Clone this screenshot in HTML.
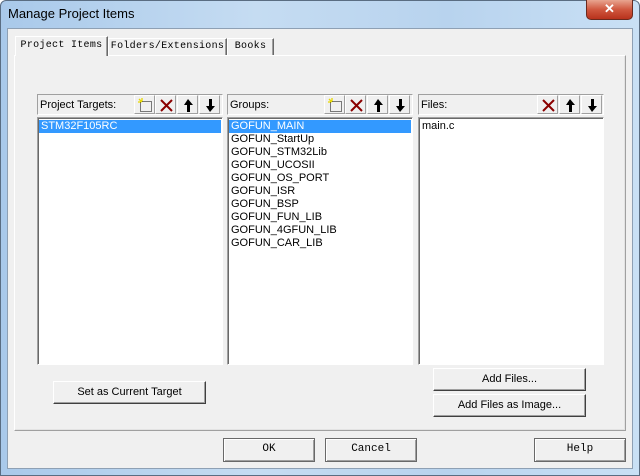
<!DOCTYPE html>
<html><head><meta charset="utf-8"><style>
*{box-sizing:border-box;margin:0;padding:0}
body{width:640px;height:476px;overflow:hidden;font-family:"Liberation Sans",sans-serif;font-size:11px;color:#000;background:#fff;position:relative}
.win{position:absolute;left:0;top:0;width:640px;height:476px;background:linear-gradient(90deg,#a9c9ea,#c5dcf2 40%,#b8d3ee 70%,#c9e0f5);border:1px solid #5a6d82;border-radius:6px 6px 0 0}
.title{position:absolute;left:8px;top:6px;font-size:13px;font-family:"Liberation Sans",sans-serif;color:#000}
.close{position:absolute;left:586px;top:0;width:47px;height:20px;background:linear-gradient(#e8a590,#d0583f 50%,#b8321c);border:1px solid #6b2a1e;border-top:none;border-radius:0 0 5px 5px;color:#fff;font-weight:bold;text-align:center;font-size:13px;line-height:18px}
.client{position:absolute;left:7px;top:28px;width:626px;height:441px;background:#f0f0f0;border:1px solid #8ea0b4}
.page{position:absolute;left:14px;top:55px;width:612px;height:376px;border:1px solid #fff;border-right-color:#a0a0a0;border-bottom-color:#a0a0a0;box-shadow:inset -1px -1px 0 #e3e3e3}
.tab{position:absolute;font-family:"Liberation Mono",monospace;font-size:10px;letter-spacing:0.3px;background:#f0f0f0;border:1px solid #fff;border-right:1px solid #696969;border-bottom:none;box-shadow:inset -1px 0 0 #a0a0a0;text-align:center;line-height:16px;white-space:nowrap;overflow:hidden}
.hdr{position:absolute;height:21px;border:1px solid #a0a0a0;border-right-color:#fff;border-bottom-color:#fff;line-height:21px;padding-left:2px}
.list{position:absolute;background:#fff;border:1px solid #a0a0a0;border-right-color:#fff;border-bottom-color:#fff;box-shadow:inset 1px 1px 0 #696969;padding:2px 1px}
.list div{height:13px;line-height:13px;padding-left:2px}
.sel{background:#3399ff;color:#fff}
.tb{position:absolute;top:95px;width:21px;height:19px;border:1px solid #fff;border-right-color:#a0a0a0;border-bottom-color:#a0a0a0}
.tb svg{position:absolute;left:2px;top:1px}
.btn{position:absolute;background:#f0f0f0;border:1px solid #fff;border-right-color:#404040;border-bottom-color:#404040;box-shadow:inset -1px -1px 0 #a0a0a0;text-align:center;line-height:21px}
.btn2{position:absolute;background:#f0f0f0;border:1px solid #696969;box-shadow:inset 1px 1px 0 #fff,inset -1px -1px 0 #a0a0a0;text-align:center;line-height:21px;font-family:"Liberation Mono",monospace}
</style></head><body>
<div class="win"></div>
<div class="title">Manage Project Items</div>
<div class="close">✕</div>
<div class="client"></div>
<div class="page"></div>
<div class="tab" style="left:108px;top:38px;width:119px;height:17px">Folders/Extensions</div>
<div class="tab" style="left:227px;top:38px;width:47px;height:17px">Books</div>
<div class="tab" style="left:15px;top:36px;width:93px;height:20px;line-height:18px;z-index:2">Project Items</div>

<div class="hdr" style="left:37px;top:94px;width:186px">Project Targets:</div>
<div class="hdr" style="left:227px;top:94px;width:186px">Groups:</div>
<div class="hdr" style="left:418px;top:94px;width:186px">Files:</div>

<svg width="0" height="0" style="position:absolute"><defs>
<g id="nw"><rect x="3.5" y="4.5" width="11" height="10" fill="none" stroke="#000" stroke-dasharray="1 1"/><path d="M2 2l3 3M5 1v3M1 5h3" stroke="#e8d800" stroke-width="1.3"/></g>
<g id="dl"><path d="M3 3l11 11M14 3L3 14" stroke="#8b0000" stroke-width="2"/></g>
<g id="up"><path d="M8 2l5 6h-3v7H7V8H4z" fill="#000"/></g>
<g id="dn"><path d="M8 15l5-6h-3V2H7v7H4z" fill="#000"/></g>
</defs></svg>
<div class="tb" style="left:134px"><svg width="16" height="16"><use href="#nw"/></svg></div>
<div class="tb" style="left:155px"><svg width="16" height="16"><use href="#dl"/></svg></div>
<div class="tb" style="left:177px"><svg width="16" height="16"><use href="#up"/></svg></div>
<div class="tb" style="left:199px"><svg width="16" height="16"><use href="#dn"/></svg></div>
<div class="tb" style="left:324px"><svg width="16" height="16"><use href="#nw"/></svg></div>
<div class="tb" style="left:345px"><svg width="16" height="16"><use href="#dl"/></svg></div>
<div class="tb" style="left:367px"><svg width="16" height="16"><use href="#up"/></svg></div>
<div class="tb" style="left:389px"><svg width="16" height="16"><use href="#dn"/></svg></div>
<div class="tb" style="left:537px"><svg width="16" height="16"><use href="#dl"/></svg></div>
<div class="tb" style="left:559px"><svg width="16" height="16"><use href="#up"/></svg></div>
<div class="tb" style="left:581px"><svg width="16" height="16"><use href="#dn"/></svg></div>

<div class="list" style="left:37px;top:117px;width:186px;height:248px"><div class="sel">STM32F105RC</div></div>
<div class="list" style="left:227px;top:117px;width:186px;height:248px">
<div class="sel">GOFUN_MAIN</div><div>GOFUN_StartUp</div><div>GOFUN_STM32Lib</div><div>GOFUN_UCOSII</div><div>GOFUN_OS_PORT</div><div>GOFUN_ISR</div><div>GOFUN_BSP</div><div>GOFUN_FUN_LIB</div><div>GOFUN_4GFUN_LIB</div><div>GOFUN_CAR_LIB</div></div>
<div class="list" style="left:418px;top:117px;width:186px;height:248px"><div>main.c</div></div>

<div class="btn" style="left:53px;top:381px;width:153px;height:23px">Set as Current Target</div>
<div class="btn" style="left:433px;top:368px;width:153px;height:23px">Add Files...</div>
<div class="btn" style="left:433px;top:394px;width:153px;height:23px">Add Files as Image...</div>
<div class="btn2" style="left:223px;top:438px;width:92px;height:24px">OK</div>
<div class="btn2" style="left:325px;top:438px;width:92px;height:24px">Cancel</div>
<div class="btn2" style="left:534px;top:438px;width:92px;height:24px">Help</div>
</body></html>
